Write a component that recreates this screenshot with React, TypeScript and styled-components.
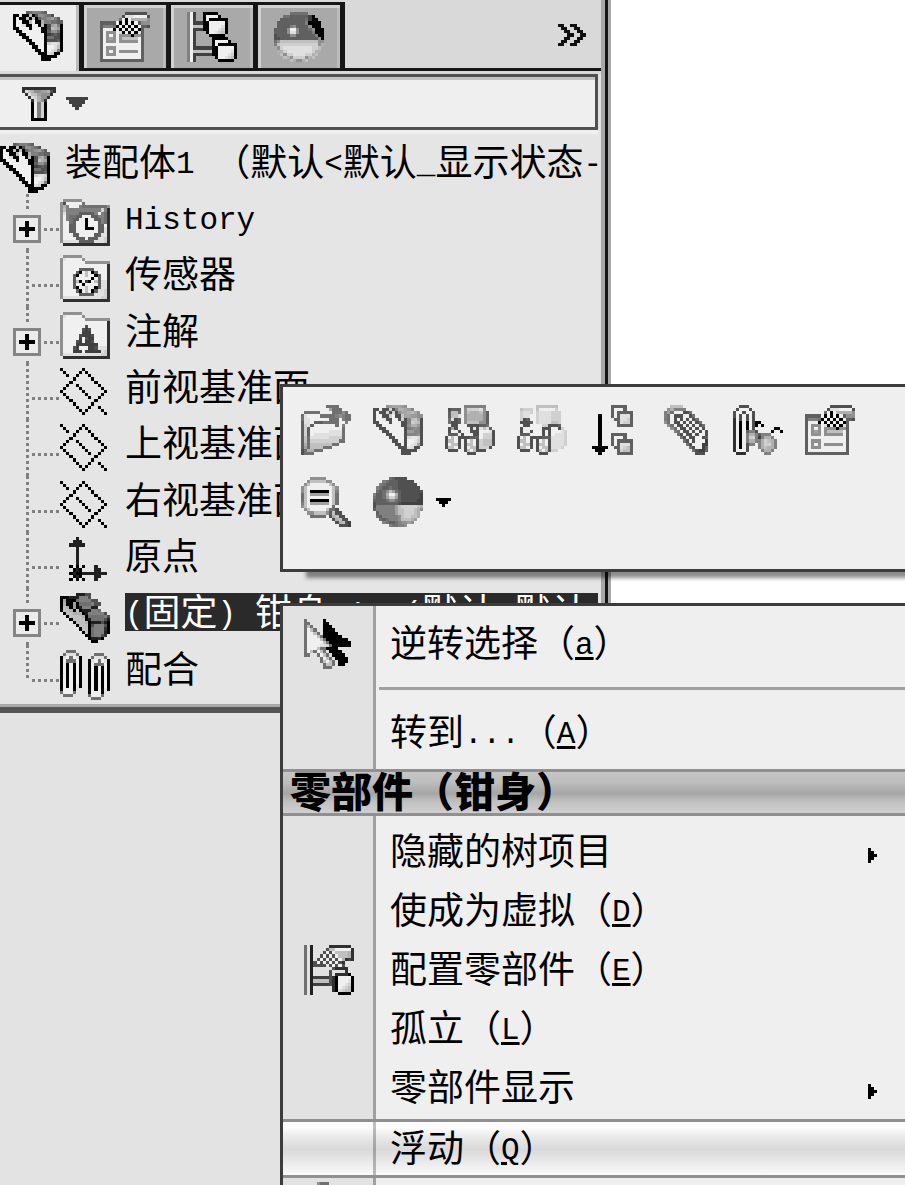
import React from "react";
import styled, { createGlobalStyle } from "styled-components";

const GlobalStyle = createGlobalStyle`
  *, *::before, *::after { box-sizing: border-box; }
  body { margin: 0; background: #fff; }
  button, input {
    font: inherit;
    color: inherit;
    background: none;
    border: 0;
    padding: 0;
    margin: 0;
    outline: none;
  }
  ul { list-style: none; margin: 0; padding: 0; }
`;

/* ---------- pixel icons: one hex digit per pixel is its grey level ---------- */

const folderTop = [".999999.........", "9efffff9........", "9fffffff99999999", "9ffffffffffffff3"];
const folderEnd = ["9eeeeeeeeeeeedd3", ".333333333333333"];

const ICONS: Record<string, string[]> = {
  assembly: [
    "....6788876.....",
    "00.00c0599875...",
    "0f00c0c06889a86.",
    "0ff00cf00b887766",
    "0ffe00ff0c05ab80",
    "00fff0fff005cba0",
    ".00ffffff0069970",
    "..00ffffff045650",
    "...00fffff077550",
    "....00ffff055560",
    ".....00fff0deed0",
    "......00ff0ffec0",
    ".......00f0fed80",
    "........000ed00.",
    ".........00000..",
    ".........000....",
  ],
  properties: [
    "........5555555.",
    ".......5eeeffff5",
    "......7f0fbbbbb9",
    "66666f0f0f0f6999",
    "688870f0f0f0f665",
    "6fff0f0f0f0f06..",
    "6f999fe0f0f0e6..",
    "6f9f9f99990996..",
    "6f9a9f9cccccf6..",
    "6f999f999999f6..",
    "6ffffffffffff6..",
    "6f999ffffffff6..",
    "6f9f9f999999f6..",
    "6f999ffffffff6..",
    "6ffffffffffff6..",
    "66666666666666..",
  ],
  configurations: [
    "8f4..00000......",
    "8f4..0ffff0.....",
    "8f4..0f000000...",
    "8f44400fffff0...",
    "8fccc00ffffe0...",
    "8f44400fffed0...",
    "8f4...0ffedc0...",
    "8f4....00000....",
    "8f4.....00000...",
    "8f4.....0ffff0..",
    "8f4.....0f000000",
    "8f44444400fffff0",
    "8fcccccc00ffffe0",
    "8f44444400fffed0",
    "8f4......0ffedc0",
    "8f4.......00000.",
  ],
  display: [
    ".....777777.....",
    "...7766666640...",
    "..666666667400..",
    ".66666666680000.",
    ".66668966669000.",
    "66669ff966679000",
    "66669ee966668000",
    "5666699666666800",
    "5566666666666690",
    "79cccccccccccc99",
    "8cdddddddddddd9b",
    ".9deeeeeeeeeddc.",
    ".bbdeeeeeeeedbb.",
    "..c9ddeeeeddbc..",
    "...cb9dddd9bc...",
    ".....cb99bc.....",
  ],
  appearance: [
    ".....765555.....",
    "...8766655555...",
    "..876666555555..",
    ".87667665555555.",
    ".7679ca765555555",
    "8667bffb65555554",
    "7667adda65555554",
    "6666799765555544",
    "5666666654444444",
    "5888888acdddddcb",
    "6888888accdddcb9",
    ".688888accdddcb.",
    ".76888889cddccb.",
    "..7678889cccba..",
    "...87667899a9...",
    ".....877889.....",
  ],
  funnel: [
    "33333333333",
    "3ecb99aab53",
    ".3ecca9993.",
    "..3edb993..",
    "...3eb93...",
    "...0f8d0...",
    "...0f8d0...",
    "...0f8d0...",
    "...0f8d0...",
    "...0f8d0...",
    "...00000...",
  ],
  dropdown: ["4444444", ".44444.", "..444..", "...4..."],
  dropdownSmall: ["00000", ".000.", "..0.."],
  submenu: ["0..", "00.", "000", "00.", "0.."],
  more: ["11..11...", ".11..11..", "..11..11.", "...11..11", "..11..11.", ".11..11..", "11..11..."],
  plus: ["..0..", "..0..", "00000", "..0..", "..0.."],
  history: [
    ".999999.........",
    "95fffff7........",
    "9b8fff8777777779",
    "9c88888888888d83",
    "9e8888666668f873",
    "9f87766fff668873",
    "9f8766ff0ff66873",
    "9ff76fff0fff6873",
    "9ff66fff0fff66f3",
    "9ff66fff000f66e3",
    "9ff66fffffff66e3",
    "9fff66fffff66ee3",
    "9ffff666f666eed3",
    "9eeeee66666eeed3",
    ".333333333333333",
  ],
  sensors: [
    ...folderTop,
    "9fffff66666ffff3",
    "9ffff60fcf06fff3",
    "9fff60ffcff06ff3",
    "9fff6fffff0f6ff3",
    "9fff6c0f40fc6ee3",
    "9fff6ff0ffff6ee3",
    "9fff60ffcff06ee3",
    "9ffff60fcf06eed3",
    "9fffff66666eeed3",
    ...folderEnd,
  ],
  annotations: [
    ...folderTop,
    "9fffffff5ffffff3",
    "9ffffff545fffff3",
    "9ffffff444fffff3",
    "9fffff54445ffff3",
    "9fffff4f544ffff3",
    "9ffff54f445ffff3",
    "9ffff4444444fff3",
    "9fff54fff445eee3",
    "9fff444f44444ed3",
    ...folderEnd,
  ],
  plane: [
    "0......0.......",
    ".0....0.0......",
    "..0..0...0.....",
    "....0.....0....",
    "...0.......0...",
    "..0..0......0..",
    ".0....0......0.",
    "0......0......0",
    ".0......0....0.",
    "..0......0..0..",
    "...0.......0...",
    "....0.....0....",
    ".....0...0..0..",
    "......0.0....0.",
    ".......0......0",
  ],
  origin: [
    ".....2..........",
    "....222.........",
    "...22222........",
    ".....2..........",
    ".....2..........",
    ".....2..........",
    ".....2..........",
    ".....2..........",
    ".....2..........",
    "...0.0.0...2....",
    "....020....22...",
    "...020022222222.",
    "....020....22...",
    "...0.0.0...2....",
  ],
  part: [
    ".....22255......",
    "0002228885......",
    "0a0007888855....",
    "0b00a07777855...",
    "0cb0a0288822....",
    "0ccb0c0222887...",
    ".0ccbbb02888885.",
    "..0ccccb07777785",
    "...0cccc02777752",
    "....0cccb0222520",
    ".....0ccc0588850",
    "......0cc0788830",
    ".......0c0788820",
    "........0078853.",
    ".........02230..",
    "..........00....",
  ],
  mates: [
    "..777...........",
    ".7eee7.....777..",
    "0ef7fe0...7eee7.",
    "0f777f0..0ef7fe0",
    "0f0f0f0..0f777f0",
    "0f0f0f0..0f0f0f0",
    "0f0f0f0..0f0f0f0",
    "0f0f0f0..0f0f0f0",
    "0f0f0f0..0f0f0f0",
    "0f0f0f0..0f0f0f0",
    "0f0f0f0..0f0f0f0",
    "0f0f0.0..0f0f0f0",
    "0fff0....0f0f0.0",
    "7fff7....0fff0..",
    ".777.....7fff7..",
    "..........777...",
  ],
  open: [
    "........7777....",
    ".........a777...",
    ".77777....77797.",
    "7effff7777789877",
    "7eeffffff777f877",
    "6eef66677777ff8.",
    "6de6fffffff7f8..",
    "6d6ffffffffff7..",
    "6d6ffffffeeee7..",
    "6d6feeeeeeeee7..",
    "6c7eeeeeedddd7..",
    "6c7ddddddddd77..",
    "6b7ccccccc77....",
    "6a7cccc777......",
    "57bb777.........",
    "5777............",
  ],
  hide: [
    "......8888888...",
    ".5666f9dddde9...",
    ".6cc7f9cbbbc96..",
    ".6ccef9bbbbb96..",
    ".7e56f9bbbbb96..",
    ".7556f9cccc996..",
    "..55fff5555667..",
    ".5a5ffff5e5ece6.",
    ".5..5fff555fffe5",
    ".666.5fff55fddd5",
    "5fcf5555666fddd5",
    "5ccf5.5fcf5dccc5",
    "5fcc5.5ccf5dccc5",
    "5ccf5.5fcc5ddd5.",
    ".555..5cfc555...",
    ".......555......",
  ],
  transparency: [
    "......ccccccc...",
    ".cdddfcfffffd...",
    ".deedfdeeeeddd..",
    ".deeffdeeeeddd..",
    ".d56ffdeeeeddd..",
    ".5556fdeeeeccd..",
    "..55ffffdd5556..",
    ".5..ffff555ff5d.",
    ".5..5fff5.5fffed",
    ".666.fff5.5feeed",
    "5fcf5555666eeeed",
    "5ccf5.5fcf5eeeed",
    "5fcc5.5ccf5eeeed",
    "5ccf5.5fcc5eeed.",
    ".555..5cfc5dd...",
    ".......555......",
  ],
  suppress: [
    ".......66666....",
    ".......6fff6....",
    ".......6f66666..",
    "...0...6f6eee6..",
    "...0....66eed6..",
    "...0.....6edd6..",
    "...0.....66666..",
    "...0............",
    "...0............",
    "...0...66666....",
    "...0...6fff6....",
    "...0...6f66666..",
    "...0...6f6eee6..",
    ".00000..66edc6..",
    "..000....6dcc6..",
    "...0.....66666..",
  ],
  mate: [
    "...cccc.........",
    "..9b8888........",
    ".8a7fff557......",
    ".87f555ff57.....",
    ".87f5f5f5f57....",
    ".97f55f5f5f57...",
    "..97f55f5f5f57..",
    "...97f55f5f5f5..",
    "....87f55f5f5f5.",
    ".....75f55f5ff5.",
    "......75f55ff56.",
    ".......75f5fff4.",
    "........75fff44.",
    ".........75ff46.",
    "..........75446.",
    "...........555..",
  ],
  viewMates: [
    "..555...........",
    ".5fff5..........",
    "5ff5ff5.........",
    "5f5f5f5.........",
    "3f5f5f5.........",
    "3f0f0f500.......",
    "3f0f0f50.0......",
    "3f0f0f5......00.",
    "3f0f6885....0..0",
    "3f0f8bb86888....",
    "3f0f8dd848bb8...",
    "3f0f8bb88bdcb8..",
    "3f0f588.8bddb8..",
    "3f0f5...8bcbb8..",
    "3fff5....8bb8...",
    ".333......88....",
  ],
  zoom: [
    "...99999........",
    "..9ccccc99......",
    ".9cffffffc9.....",
    "9cffffffffc9....",
    "9cf000000fc8....",
    "7cfaaaaaafc7....",
    "7cffffffffc7....",
    "7cf000000fc7....",
    "8cfaaaaaafc7....",
    "9cffffffff7.....",
    ".9cfffffc775....",
    "..99cccc96c55...",
    "...77777.5bc55..",
    "..........5bc55.",
    "...........5bc54",
    "............5554",
  ],
  invert: [
    "7.....0.........",
    "77....00........",
    "7c7...000.......",
    "7fc7..0000......",
    "7ffc7.00000.....",
    "7fffc7000000....",
    "7ffffc70000000..",
    "7fffffc70000000.",
    "7ffffeed7000000.",
    "7fffc770000.....",
    "7fc7fc7.0000....",
    "77..7fc7.0000...",
    ".....7fc7.0000..",
    ".....7cfc7.000..",
    "......7cc7.00...",
    "......777.......",
  ],
  configure: [
    "7.2.....3333333.",
    "7.2....5ccfffff3",
    "7.2...5f5fccccb3",
    "7.2..5f5f5fcccb3",
    "7.2.5f5f5f5fb343",
    "7.25f5f5f5f53...",
    "7.25555.5f5f5...",
    "7.2......53333..",
    "7.2.....5eeee3..",
    "7.2.....5e33330.",
    "7.244444530ffff0",
    "7.2ccccc530fffe0",
    "7.244444530ffed0",
    "7.2......30fedc0",
    "7.2......30edcc0",
    "7.2........0000.",
  ],
  partial: ["....9777........", "...9c7777......."],
};

const Svg = styled.svg`
  display: block;
  flex: none;
`;

function PixelIcon({ name, lift = 0 }: { name: string; lift?: number }) {
  const rows = ICONS[name];
  const cols = rows[0].length;
  const w = Math.round(cols * 3.125);
  const h = Math.round(rows.length * 3.125);
  const rects: React.ReactNode[] = [];
  rows.forEach((row, y) => {
    let x = 0;
    while (x < row.length) {
      const c = row[x];
      let end = x + 1;
      while (end < row.length && row[end] === c) end++;
      if (c !== ".") {
        const g = Math.round(((lift + (parseInt(c, 16) * (15 - lift)) / 15) / 15) * 240);
        rects.push(
          <rect key={`${x}-${y}`} x={x} y={y} width={end - x} height={1} fill={`rgb(${g},${g},${g})`} />
        );
      }
      x = end;
    }
  });
  return (
    <Svg width={w} height={h} viewBox={`0 0 ${cols} ${rows.length}`} shapeRendering="crispEdges" aria-hidden="true">
      {rects}
    </Svg>
  );
}

/* ---------- page ---------- */

const Page = styled.main`
  position: relative;
  min-height: 100vh;
  overflow: hidden;
  display: grid;
  grid-template-columns: minmax(0, 611fr) minmax(0, 294fr);
  font-family: "Noto Sans CJK SC", "Liberation Sans", sans-serif;
  font-size: 37px;
  line-height: 38px;
  color: #000;
`;

const Left = styled.div`
  background: #e3e3e3;
`;

const Panel = styled.section`
  background: #e5e5e5;
  border-right: 3px solid #a8a8a8;
  border-bottom: 6px solid #555;
  box-shadow: inset 0 -3px 0 #a8a8a8;
  padding-bottom: 6px;
`;

const PanelBody = styled.div`
  border-right: 3px solid #161616;
  box-shadow: inset -4px 0 0 #a8a8a8;
  padding-right: 4px;
`;

const TabStrip = styled.div`
  display: flex;
  height: 74px;
  padding-top: 2px;
  background: linear-gradient(#161616, #161616) 0 68px / 100% 3px no-repeat #d9d9d9;
`;

const Tab = styled.button<{ $active?: boolean }>`
  flex: none;
  display: grid;
  place-items: center;
  width: 87px;
  height: 69px;
  border-top: 3px solid #161616;
  border-right: 5px solid #161616;
  border-bottom: ${(p) => (p.$active ? "0" : "3px solid #161616")};
  background: ${(p) => (p.$active ? "#ededed" : "#a9a9a9")};
  box-shadow: ${(p) =>
    p.$active ? "inset -3px 0 0 #bcbcbc" : "inset 3px 3px 0 #d2d2d2, inset -3px 0 0 #bcbcbc"};
  &:first-child {
    width: 84px;
    padding: 0 3px 4px 0;
  }
`;

const MoreButton = styled.button`
  margin-left: auto;
  padding: 0 15px 6px;
`;

const FilterBar = styled.div`
  display: flex;
  align-items: center;
  gap: 11px;
  height: 56px;
  margin-right: 3px;
  padding-left: 22px;
  background: #efefef;
  border: 3px solid #505050;
  border-left: 0;
  box-shadow: inset 0 3px 0 #c4c4c4, 0 4px 0 #f0f0f0;
`;

const FilterButton = styled.button`
  display: flex;
  align-items: center;
  gap: 10px;
  padding-top: 3px;
`;

const FilterInput = styled.input`
  flex: 1;
  min-width: 0;
  height: 38px;
`;

const Tree = styled.ul`
  padding-top: 8px;
`;

const Row = styled.li`
  display: flex;
  height: 56px;
  &:nth-child(3n) { height: 57px; }
`;

const Branch = styled.span<{ $last?: boolean }>`
  position: relative;
  flex: none;
  width: 60px;
  background:
    repeating-linear-gradient(#808080 0 3px, transparent 3px 6px) 26px 0 / 3px ${(p) => (p.$last ? "36px" : "100%")} no-repeat,
    repeating-linear-gradient(90deg, #808080 0 3px, transparent 3px 6px) 32px 34px / 28px 3px no-repeat;
`;

const Expander = styled.button`
  position: absolute;
  left: 13px;
  top: 21px;
  width: 28px;
  height: 28px;
  display: grid;
  place-items: center;
  border: 3px solid #858585;
  background: #ececec;
  box-shadow: 0 0 0 3px #e5e5e5;
`;

const Node = styled.span`
  display: flex;
  flex: 1;
  min-width: 0;
  gap: 15px;
  padding-top: 5px;
`;

const NodeIcon = styled.span`
  flex: none;
  width: 50px;
`;

const Label = styled.span<{ $selected?: boolean }>`
  flex: 1;
  min-width: 0;
  height: 38px;
  line-height: 34px;
  white-space: pre;
  overflow-x: clip;
  overflow-y: visible;
  color: ${(p) => (p.$selected ? "#fff" : "#000")};
  background: ${(p) => (p.$selected ? "#2a2a2a" : "none")};
  margin-right: ${(p) => (p.$selected ? "3px" : "0")};
`;

const Latin = styled.span`
  font-family: "Liberation Mono", monospace;
  font-size: 31px;
  line-height: 1;
  vertical-align: 3px;
`;

const Key = styled(Latin)`
  text-decoration: underline;
  text-decoration-thickness: 3px;
  text-underline-offset: 3px;
`;

const QuickBar = styled.div`
  position: absolute;
  left: 280px;
  right: 0;
  top: 384px;
  display: flex;
  flex-direction: column;
  gap: 22px;
  padding: 18px 18px 42px;
  background: #efefef;
  border: 3px solid #3c3c3c;
  border-right: 0;
  box-shadow: 24px 8px 4px -2px rgba(0, 0, 0, 0.45);
`;

const QuickRow = styled.div`
  display: flex;
  gap: 22px;
`;

const QuickButton = styled.button`
  flex: none;
  display: flex;
  align-items: center;
  gap: 12px;
`;

const Menu = styled.div`
  position: absolute;
  left: 280px;
  right: 0;
  top: 603px;
  bottom: 0;
  display: flex;
  flex-direction: column;
  overflow: hidden;
  border: 3px solid #3c3c3c;
  border-right: 0;
  border-bottom: 0;
  background: linear-gradient(90deg, #e2e2e2 0 90px, #a0a0a0 90px 93px, #efefef 93px);
`;

const Group = styled.div<{ $titled?: boolean }>`
  padding: ${(p) => (p.$titled ? "6px 0 4px" : "8px 0 7px")};
`;

const Item = styled.button<{ $hot?: boolean }>`
  display: flex;
  align-items: center;
  width: 100%;
  height: 59px;
  text-align: left;
  margin-top: ${(p) => (p.$hot ? "2px" : "0")};
  border: solid #909090;
  border-width: ${(p) => (p.$hot ? "3px 0" : "0")};
  background: ${(p) =>
    p.$hot
      ? "linear-gradient(90deg, transparent 0 90px, rgba(0,0,0,.25) 90px 93px, transparent 93px), linear-gradient(#fdfdfd 10%, #e8e8e8 30%, #d9d9d9 52%, #e6e6e6 70%, #fafafa)"
      : "none"};
`;

const Gutter = styled.span`
  flex: none;
  width: 107px;
  padding-left: 21px;
`;

const ItemText = styled.span`
  flex: 1;
  padding-bottom: 5px;
  white-space: pre;
`;

const SubmenuMark = styled.span`
  padding: 6px 28px 0 0;
`;

const Separator = styled.hr`
  height: 3px;
  margin: 14px 0 13px 96px;
  border: 0;
  background: #a0a0a0;
`;

const GroupTitle = styled.h2`
  flex: none;
  height: 47px;
  margin: 0;
  padding-left: 7px;
  border: solid #909090;
  border-width: 3px 0;
  background: linear-gradient(#c6c6c6, #bdbdbd 25%, #a6a6a6 52%, #c0c0c0 72%, #d0d0d0);
  font-size: 41px;
  font-weight: 900;
  line-height: 34px;
  white-space: pre;
`;

type NodeData = { id: string; icon: string; label: React.ReactNode; expandable?: boolean; selected?: boolean };

const NODES: NodeData[] = [
  { id: "history", icon: "history", label: <Latin>History</Latin>, expandable: true },
  { id: "sensors", icon: "sensors", label: "传感器" },
  { id: "notes", icon: "annotations", label: "注解", expandable: true },
  { id: "front", icon: "plane", label: "前视基准面" },
  { id: "top", icon: "plane", label: "上视基准面" },
  { id: "right", icon: "plane", label: "右视基准面" },
  { id: "origin", icon: "origin", label: "原点" },
  {
    id: "vise",
    icon: "part",
    expandable: true,
    selected: true,
    label: (
      <>
        <Latin>(</Latin>固定<Latin>) </Latin>钳身<Latin>{"<1> ("}</Latin>默认<Latin>{"<"}</Latin>默认
      </>
    ),
  },
  { id: "mates", icon: "mates", label: "配合" },
];

const QUICK_TOP: [string, string, number][] = [
  ["open", "打开零件", 0],
  ["assembly", "编辑零件", 5],
  ["hide", "隐藏零部件", 0],
  ["transparency", "更改透明度", 0],
  ["suppress", "压缩", 0],
  ["mate", "配合", 0],
  ["viewMates", "查看配合", 0],
  ["properties", "零部件属性", 0],
];

function MenuItem(props: { icon?: string; text: React.ReactNode; hotkey?: string; submenu?: boolean; hot?: boolean }) {
  return (
    <Item role="menuitem" $hot={props.hot}>
      <Gutter>{props.icon && <PixelIcon name={props.icon} />}</Gutter>
      <ItemText>
        {props.text}
        {props.hotkey && (
          <>
            （<Key>{props.hotkey}</Key>）
          </>
        )}
      </ItemText>
      {props.submenu && (
        <SubmenuMark>
          <PixelIcon name="submenu" />
        </SubmenuMark>
      )}
    </Item>
  );
}

export default function App() {
  return (
    <>
      <GlobalStyle />
      <Page>
        <Left>
          <Panel>
            <PanelBody>
              <TabStrip role="tablist">
                <Tab role="tab" $active aria-selected aria-label="设计树">
                  <PixelIcon name="assembly" />
                </Tab>
                <Tab role="tab" aria-label="属性">
                  <PixelIcon name="properties" />
                </Tab>
                <Tab role="tab" aria-label="配置">
                  <PixelIcon name="configurations" />
                </Tab>
                <Tab role="tab" aria-label="显示">
                  <PixelIcon name="display" />
                </Tab>
                <MoreButton aria-label="更多">
                  <PixelIcon name="more" />
                </MoreButton>
              </TabStrip>
              <FilterBar>
                <FilterButton aria-label="过滤器">
                  <PixelIcon name="funnel" />
                  <PixelIcon name="dropdown" />
                </FilterButton>
                <FilterInput aria-label="过滤" />
              </FilterBar>
              <Tree>
                <Row>
                  <Node>
                    <NodeIcon>
                      <PixelIcon name="assembly" />
                    </NodeIcon>
                    <Label>
                      装配体<Latin>1 </Latin>（默认<Latin>{"<"}</Latin>默认<Latin>_</Latin>显示状态<Latin>-</Latin>
                    </Label>
                  </Node>
                </Row>
                {NODES.map((n, i) => (
                  <Row key={n.id}>
                    <Branch $last={i === NODES.length - 1}>
                      {n.expandable && (
                        <Expander aria-label="展开">
                          <PixelIcon name="plus" />
                        </Expander>
                      )}
                    </Branch>
                    <Node>
                      <NodeIcon>
                        <PixelIcon name={n.icon} />
                      </NodeIcon>
                      <Label $selected={n.selected}>{n.label}</Label>
                    </Node>
                  </Row>
                ))}
              </Tree>
            </PanelBody>
          </Panel>
        </Left>

        <QuickBar role="toolbar">
          <QuickRow>
            {QUICK_TOP.map(([icon, label, lift]) => (
              <QuickButton key={icon} aria-label={label}>
                <PixelIcon name={icon} lift={lift} />
              </QuickButton>
            ))}
          </QuickRow>
          <QuickRow>
            <QuickButton aria-label="放大所选范围">
              <PixelIcon name="zoom" />
            </QuickButton>
            <QuickButton aria-label="外观">
              <PixelIcon name="appearance" />
              <PixelIcon name="dropdownSmall" />
            </QuickButton>
          </QuickRow>
        </QuickBar>

        <Menu role="menu">
          <Group>
            <MenuItem icon="invert" text="逆转选择" hotkey="a" />
            <Separator />
            <MenuItem
              text={
                <>
                  转到<Latin>...</Latin>
                </>
              }
              hotkey="A"
            />
          </Group>
          <GroupTitle>零部件（钳身）</GroupTitle>
          <Group $titled>
            <MenuItem text="隐藏的树项目" submenu />
            <MenuItem text="使成为虚拟" hotkey="D" />
            <MenuItem icon="configure" text="配置零部件" hotkey="E" />
            <MenuItem text="孤立" hotkey="L" />
            <MenuItem text="零部件显示" submenu />
            <MenuItem text="浮动" hotkey="Q" hot />
          </Group>
          <Gutter>
            <PixelIcon name="partial" />
          </Gutter>
        </Menu>
      </Page>
    </>
  );
}
